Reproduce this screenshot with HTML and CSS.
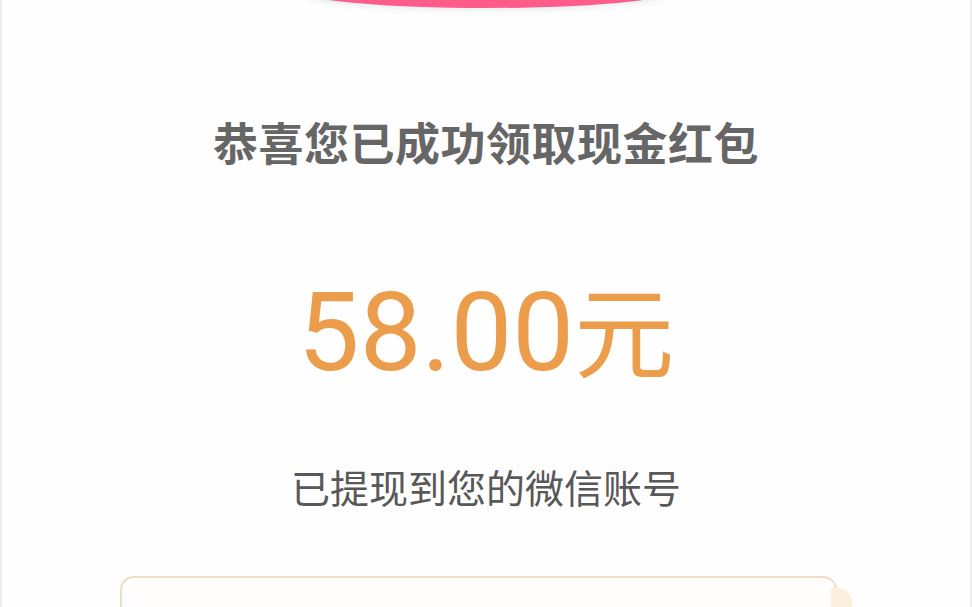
FILE: index.html
```html
<!DOCTYPE html>
<html lang="zh-CN">
<head>
  <meta charset="UTF-8" />
  <title>领取成功</title>
  <link rel="stylesheet" href="styles.css">
</head>
<body>
  <div class="page">
    <div class="cap"></div>
    <h1 class="title">恭喜您已成功领取现金红包</h1>
    <div class="amount">58.00<span class="unit">元</span></div>
    <p class="note">已提现到您的微信账号</p>
    <div class="card-row">
      <div class="card"></div>
      <div class="dot"></div>
    </div>
  </div>
</body>
</html>
```

FILE: styles.css
```css
:root {
  --pink: #ff5c8b;
  --gray-title: #666;
  --gray-text: #585858;
  --orange: #eb9d4b;
  --beige-line: #f1dcc6;
  --peach: #fdeedf;
}

body {
  margin: 0;
  background: #fff;
  font-family: "Noto Sans CJK SC", "Noto Sans", sans-serif;
}

.page {
  height: 607px;
  box-sizing: border-box;
  border-left: 2px solid #ececec;
  border-right: 2px solid #ececec;
  background: #fefefe;
  overflow: hidden;
  display: flex;
  flex-direction: column;
  align-items: center;
}

/* pink header bottom edge */
.cap {
  width: 370px;
  height: 34px;
  margin-top: -26px;
  border-radius: 50%;
  background: var(--pink);
  box-shadow: 0 3px 5px rgba(120, 150, 170, 0.15);
  flex-shrink: 0;
}

.title {
  margin: 107px 0 0;
  font-size: 45px;
  line-height: 54px;
  font-weight: 700;
  color: var(--gray-title);
  letter-spacing: 0.5px;
}

.amount {
  margin-top: 103px;
  font-family: Roboto, sans-serif;
  font-size: 110px;
  line-height: 110px;
  color: var(--orange);
  height: 110px;
}
.amount .unit {
  font-family: "Noto Sans CJK SC", sans-serif;
  font-size: 100px;
  margin-left: 0;
}

.note {
  margin: 81px 0 0;
  font-size: 39px;
  line-height: 46px;
  color: var(--gray-text);
}

.card-row {
  margin-top: 67px;
  display: flex;
  align-items: flex-start;
  width: 732px;
}
.card {
  width: 717px;
  height: 60px;
  box-sizing: border-box;
  border: 2px solid var(--beige-line);
  border-radius: 14px;
  background: #fffefd;
  flex-shrink: 0;
}
.dot {
  width: 22px;
  height: 30px;
  margin: 12px 0 0 -6px;
  border-radius: 0 14px 0 0;
  background: var(--peach);
}
```
